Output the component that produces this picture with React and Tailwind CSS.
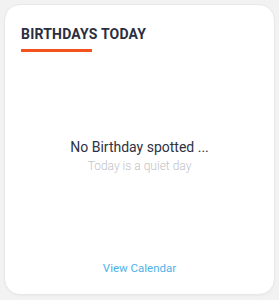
export default function App() {
  return (
    <div className="w-[279px] h-[300px] bg-[#f2f2f3] p-[4px] pb-[5px]" style={{ fontFamily: "Roboto, 'Liberation Sans', sans-serif" }}>
      <div className="h-full bg-white rounded-[16px] border border-[#e8e8ea] shadow-[0_1px_2px_rgba(0,0,0,0.04)] flex flex-col">
        <div className="px-[16px] pt-[20px]">
          <h2 className="text-[14px] leading-[18px] font-bold text-[#2b2e3f] tracking-[0.2px]">BIRTHDAYS TODAY</h2>
          <div className="mt-[6px] h-[3px] w-[71px] bg-[#f4511e]" />
        </div>
        <div className="mt-[85px] flex flex-col items-center">
          <p className="text-[14px] leading-[20px] text-[#2e3142]">No Birthday spotted ...</p>
          <p className="mt-[1px] text-[12px] leading-[16px] text-[#c2c2c6] font-light">Today is a quiet day</p>
        </div>
        <div className="mt-auto flex justify-center pb-[18px]">
          <a className="text-[11.5px] leading-[16px] text-[#4fb2e8]">View Calendar</a>
        </div>
      </div>
    </div>
  );
}
